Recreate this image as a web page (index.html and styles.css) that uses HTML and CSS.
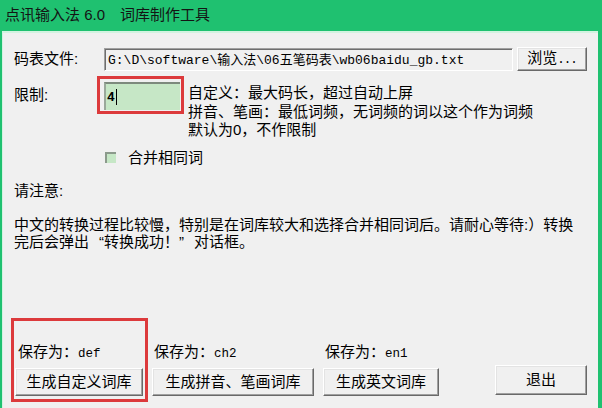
FILE: index.html
```html
<!DOCTYPE html>
<html lang="zh-CN">
<head>
<meta charset="utf-8">
<title>词库制作工具</title>
<link rel="stylesheet" href="styles.css">
</head>
<body>
<div class="titlebar"><span>点讯输入法 6.0</span><span class="title-gap">词库制作工具</span></div>
<div class="window">
  <div class="file-row">
    <span class="label file-label">码表文件:</span>
    <div class="path-input"><span class="mono">G:\D\software\</span><span class="cjk">输入法</span><span class="mono">\06</span><span class="cjk">五笔码表</span><span class="mono">\wb06baidu_gb.txt</span></div>
    <button class="btn browse">浏览<span class="mono dots">...</span></button>
  </div>
  <div class="limit-row">
    <span class="label limit-label">限制:</span>
    <div class="mark limit-mark">
      <div class="limit-input"><span class="digit">4</span><span class="caret"></span></div>
    </div>
    <div class="hint">
      <div>自定义：最大码长，超过自动上屏</div>
      <div>拼音、笔画：最低词频，无词频的词以这个作为词频</div>
      <div>默认为0，不作限制</div>
    </div>
  </div>
  <div class="check-row"><span class="checkbox"></span><span class="check-text">合并相同词</span></div>
  <div class="note-title">请注意:</div>
  <div class="note">中文的转换过程比较慢，特别是在词库较大和选择合并相同词后。请耐心等待:）转换<br>完后会弹出<span class="ql">“</span>转换成功！<span class="qr">”</span>对话框。</div>
  <div class="actions">
    <div class="mark save-mark">
      <div class="save-label first-label">保存为：<span class="mono">def</span></div>
      <button class="btn gen gen-def">生成自定义词库</button>
    </div>
    <div class="save-col col-ch2">
      <div class="save-label">保存为：<span class="mono">ch2</span></div>
      <button class="btn gen gen-ch2">生成拼音、笔画词库</button>
    </div>
    <div class="save-col col-en1">
      <div class="save-label">保存为：<span class="mono">en1</span></div>
      <button class="btn gen gen-en1">生成英文词库</button>
    </div>
    <button class="btn quit">退出</button>
  </div>
</div>
</body>
</html>
```

FILE: styles.css
```css
* { box-sizing: border-box; }
html, body { margin: 0; padding: 0; }
body {
  width: 602px;
  height: 408px;
  overflow: hidden;
  background: #1fc170;
  font-family: "Liberation Sans", "Noto Sans CJK SC", sans-serif;
  font-size: 15px;
  color: #000;
}
.titlebar {
  height: 31px;
  line-height: 30px;
  padding-left: 5px;
  font-size: 15px;
  color: #141414;
  white-space: nowrap;
}
.title-gap { margin-left: 15px; }
.window {
  margin: 0 4px 0 2px;
  height: 377px;
  background: #f0f0f0;
  border-top: 2px solid #d2f3e0;
  border-left: 1px solid #d2f3e0;
  padding: 14px 0 6px 11px;
  display: flex;
  flex-direction: column;
}
.mono { font-family: "Liberation Mono", monospace; font-size: 12.5px; }
.cjk { font-family: "Liberation Sans", "Noto Sans CJK SC", sans-serif; font-size: 13px; }
.label { line-height: 18px; white-space: nowrap; }

.file-row { display: flex; align-items: center; height: 24px; }
.file-label { width: 90px; }
.path-input {
  width: 409px;
  height: 23px;
  margin-right: 4px;
  background: #f0f0f0;
  border: 1px solid;
  border-color: #a0a0a0 #ffffff #ffffff #a0a0a0;
  box-shadow: inset 1px 1px 0 #6e6e6e;
  padding-left: 3px;
  line-height: 20px;
  white-space: nowrap;
  overflow: hidden;
}
.path-input .mono { font-size: 13px; }
.btn {
  font-family: inherit;
  font-size: 15px;
  color: #000;
  background: #f0f0f0;
  border: 1px solid;
  border-color: #ffffff #696969 #696969 #ffffff;
  box-shadow: inset -1px -1px 0 #a0a0a0, inset 1px 1px 0 #e3e3e3;
  padding: 0;
  margin: 0;
  line-height: 20px;
  white-space: nowrap;
}
.browse { width: 70px; height: 24px; }
.dots { letter-spacing: -1px; }

.limit-row { display: flex; align-items: flex-start; margin-top: 5px; }
.limit-label { width: 83px; margin-top: 10px; }
.mark { border: 3px solid #dc3a3c; }
.limit-mark { width: 87px; height: 38px; padding: 3px 1px 1px 4px; }
.limit-input {
  width: 76px;
  height: 28px;
  background: #c6e7c6;
  border-top: 2px solid #7d8a7d;
  border-left: 2px solid #9aa89a;
  display: flex;
  align-items: center;
  padding-left: 1px;
}
.digit { font-family: "Liberation Mono", monospace; font-weight: bold; font-size: 13px; }
.caret { width: 1px; height: 16px; background: #000; margin-left: 1px; }
.hint { margin-left: 4px; margin-top: 8px; line-height: 18.5px; white-space: nowrap; }

.check-row { display: flex; align-items: center; height: 18px; margin-top: 9px; padding-left: 91px; }
.checkbox {
  width: 11px;
  height: 11px;
  background: #c6e7c6;
  border-top: 2px solid #8c9a8c;
  border-left: 2px solid #8c9a8c;
}
.check-text { margin-left: 12px; line-height: 18px; }

.note-title { margin-top: 15px; line-height: 18px; }
.note { margin-top: 16px; line-height: 17px; white-space: nowrap; }
.ql { padding-left: 10px; }
.qr { padding-right: 10px; }

.actions { margin-top: auto; margin-left: -3px; display: flex; align-items: flex-end; }
.save-mark {
  width: 137px;
  padding: 22px 2px 3px 1px;
  display: flex;
  flex-direction: column;
}
.save-label { line-height: 18px; height: 18px; margin-bottom: 7px; padding-left: 2px; white-space: nowrap; }
.first-label { padding-left: 3px; }
.gen { height: 28px; }
.gen-def { width: 128px; }
.save-col { display: flex; flex-direction: column; margin-bottom: 6px; }
.col-ch2 { margin-left: 4px; }
.gen-ch2 { width: 162px; }
.col-en1 { margin-left: 9px; }
.gen-en1 { width: 116px; }
.quit { width: 92px; height: 30px; margin-left: 56px; margin-bottom: 7px; }
```
